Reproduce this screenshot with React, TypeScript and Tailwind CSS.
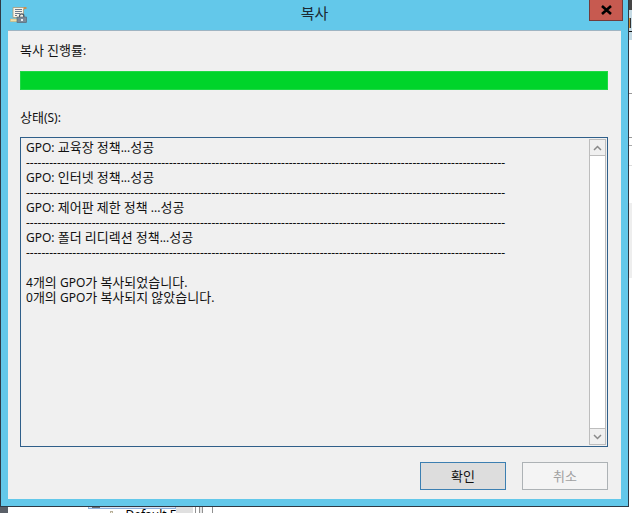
const FONT = "[font-family:'Noto_Sans','Noto_Sans_CJK_KR',sans-serif]";

const dashes = "-".repeat(124);

const lines: string[] = [
  "GPO: 교육장 정책...성공",
  dashes,
  "GPO: 인터넷 정책...성공",
  dashes,
  "GPO: 제어판 제한 정책 ...성공",
  dashes,
  "GPO: 폴더 리디렉션 정책...성공",
  dashes,
  "\u00a0",
  "4개의 GPO가 복사되었습니다.",
  "0개의 GPO가 복사되지 않았습니다.",
];

// Hangul is set a little larger than Latin, as the original UI font does.
function T({ children }: { children: string }) {
  const parts = children.split(/([\uac00-\ud7a3]+)/);
  return (
    <>
      {parts.map((p, i) =>
        i % 2 === 1 ? (
          <span key={i} className="text-[13px]">
            {p}
          </span>
        ) : (
          <span key={i}>{p}</span>
        ),
      )}
    </>
  );
}

function AppIcon() {
  return (
    <svg width="17" height="16" viewBox="0 0 17 16" className="block">
      <path d="M3 .5h10.5l1.5 1.5h-1.5v8.5H3z" fill="#f8f4e8" stroke="#a89a78" strokeWidth="0.8" />
      <path d="M5 2.5h7M5 4.5h7M5 6.5h5M5 8.5h2" stroke="#6c7a8c" strokeWidth="1" />
      <path d="M13.5 0h3v2h-3z" fill="#c98f4e" />
      <rect x="0.3" y="12" width="10" height="2.6" fill="#f2dfa8" stroke="#c9b27a" strokeWidth="0.6" />
      <rect x="7" y="10" width="9.6" height="5.6" fill="#7a8a98" stroke="#55636f" strokeWidth="0.6" />
      <path d="M9.5 10V9a2.2 2.2 0 0 1 4.4 0v1" fill="none" stroke="#4d5a66" strokeWidth="1.2" />
      <rect x="11" y="12" width="2" height="2" fill="#e8eef2" />
    </svg>
  );
}

function Chevron({ up }: { up: boolean }) {
  return (
    <svg width="9" height="6" viewBox="0 0 9 6" className="block">
      <path d={up ? "M1 5l3.5-3.5L8 5" : "M1 1l3.5 3.5L8 1"} fill="none" stroke="#8a8a8a" strokeWidth="1.5" />
    </svg>
  );
}

function RightStrip() {
  return (
    <div className="w-[3px] h-[507px] flex flex-col shrink-0 bg-white">
      <div className="h-[10px] bg-[#454545]" />
      <div className="h-[8px] bg-[#c6dbe5]" />
      <div className="h-[10px] flex bg-[#c6dbe5]">
        <div className="w-[1px] bg-[#c98a30]" />
        <div className="w-[1px] bg-[#333333]" />
      </div>
      <div className="h-[3px] bg-[#c6dbe5]" />
      <div className="h-[1px] bg-[#111111]" />
      <div className="h-[8px] bg-[#c6dbe5]" />
      <div className="h-[53px]" />
      <div className="h-[1px] bg-[#999999]" />
      <div className="h-[43px]" />
      <div className="h-[1px] bg-[#999999]" />
      <div className="h-[7px]" />
      <div className="h-[1px] bg-[#aaaaaa]" />
      <div className="h-[19px]" />
      <div className="h-[1px] bg-[#dddddd]" />
      <div className="h-[37px]" />
      <div className="h-[75px] bg-[#eeeeee]" />
    </div>
  );
}

function BottomStrip() {
  return (
    <div className="h-[6px] flex overflow-hidden bg-white">
      <div className="w-[8px] bg-[#5a6068]" />
      <div className="w-[80px]" />
      <div className="w-[88px] flex flex-col overflow-hidden">
        <div className="h-[2px] shrink-0 flex border-x border-b border-[#8fb0dc] bg-[#dbe7f5] pl-[3px]">
          <div className="w-[8px] bg-[#6e6e6e]" />
        </div>
        <div className="flex pl-[22px] pt-[1px]">
          <div className="w-[12px] h-[3px] mt-[1px] border-x border-t border-[#b8b09a] bg-[#f7f2e0]" />
          <div className="ml-[8px] -mt-[3px] pl-[4px] text-[12px] leading-[16px] text-black whitespace-nowrap">Default F</div>
        </div>
      </div>
      <div className="w-[17px] bg-[#e0e0e0]" />
      <div className="w-[2px]" />
      <div className="w-[1px] bg-[#909090]" />
      <div className="w-[3px]" />
      <div className="w-[4px] bg-[#e6e6e6] border-x border-[#909090]" />
      <div className="w-[9px]" />
      <div className="w-[1px] bg-[#909090]" />
    </div>
  );
}

export default function App() {
  return (
    <div className={`w-[632px] h-[513px] overflow-hidden bg-white flex flex-col ${FONT}`}>
      <div className="flex h-[507px]">
        {/* dialog window */}
        <div className="w-[629px] h-[507px] border-l border-r border-b border-[#2e3a46] bg-[#63c8ea] flex flex-col px-[7px] pb-[7px]">
          <div className="h-[30px] shrink-0 grid grid-cols-[1fr_auto_1fr]">
            <div className="pl-[2px] pt-[7px]">
              <AppIcon />
            </div>
            <span className="text-[15px] leading-[20px] pt-[3px] text-[#1c2a33]">복사</span>
            <div className="flex justify-end -mr-[2px]">
              <div className="w-[34px] h-[21px] bg-[#c75a50] border-x border-b border-[#713c3c] flex items-center justify-center">
                <svg width="13" height="10" viewBox="0 0 13 10" className="block">
                  <path d="M2 1l9 8M11 1l-9 8" stroke="#000" strokeWidth="2.6" />
                </svg>
              </div>
            </div>
          </div>

          <div className="flex-1 flex flex-col bg-[#f0f0f0] border-t border-[#9fb4c2] pl-[12px] pr-[13px] pt-[11px] text-[12px] leading-[16px] text-[#111111]">
            <div className="h-[16px]">
              <T>복사 진행률:</T>
            </div>
            <div className="mt-[13px] h-[19px] bg-[#00d42a] border border-[#1fd845]" />
            <div className="mt-[19px] h-[16px]">
              <T>상태(S):</T>
            </div>
            <div className="mt-[12px] h-[310px] border border-[#2f5f8a] flex">
              <div className="flex-1 min-w-0 pl-[5px] pt-[2px] text-[12px] leading-[15px]">
                {lines.map((l, i) => (
                  <div key={i} className="h-[15px] whitespace-nowrap">
                    <T>{l}</T>
                  </div>
                ))}
              </div>
              <div className="w-[17px] my-[1px] mr-[1px] border border-[#bdbdbd] bg-white flex flex-col justify-between shrink-0">
                <div className="h-[16px] bg-[#f0f0f0] border-b border-[#bdbdbd] flex items-center justify-center">
                  <Chevron up />
                </div>
                <div className="h-[16px] bg-[#f0f0f0] border-t border-[#bdbdbd] flex items-center justify-center">
                  <Chevron up={false} />
                </div>
              </div>
            </div>
            <div className="mt-[15px] flex justify-end gap-[16px]">
              <div className="w-[86px] h-[28px] border border-[#3c7fb1] bg-[#dddddd] flex items-center justify-center text-[#111111]">
                <T>확인</T>
              </div>
              <div className="w-[86px] h-[28px] border border-[#adb2b5] bg-[#f4f4f4] flex items-center justify-center text-[#a0a0a0]">
                <T>취소</T>
              </div>
            </div>
          </div>
        </div>
        <RightStrip />
      </div>
      <BottomStrip />
    </div>
  );
}
